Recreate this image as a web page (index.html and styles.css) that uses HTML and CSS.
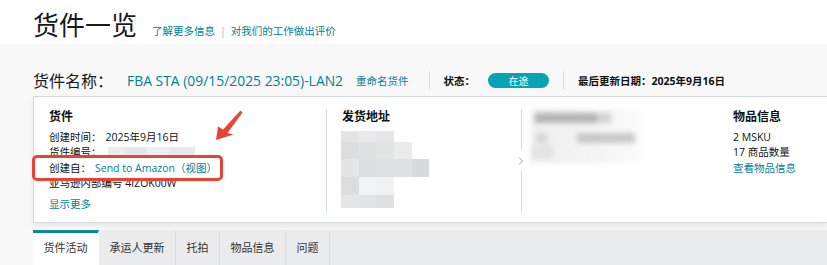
FILE: index.html
```html
<!DOCTYPE html>
<html lang="zh-CN">
<head>
<meta charset="utf-8">
<title>货件一览</title>
<link rel="stylesheet" href="styles.css">
</head>
<body>
<header class="top">
  <h1 class="title">货件一览</h1>
  <nav class="top-links">
    <a href="#">了解更多信息</a>
    <span class="sep">|</span>
    <a href="#">对我们的工作做出评价</a>
  </nav>
</header>
<main class="page">
  <div class="ship-head">
    <span class="ship-label">货件名称：</span>
    <a class="ship-name" href="#">FBA STA (09/15/2025 23:05)-LAN2</a>
    <a class="rename" href="#">重命名货件</a>
    <span class="vdiv"></span>
    <span class="status-label">状态：</span>
    <span class="pill">在途</span>
    <span class="vdiv vdiv-2"></span>
    <span class="updated">最后更新日期：2025年9月16日</span>
  </div>

  <section class="card">
    <div class="col col-ship">
      <h3 class="col-title">货件</h3>
      <div class="row"><span class="k">创建时间：</span>2025年9月16日</div>
      <div class="row"><span class="k">货件编号：</span><span class="redact"></span></div>
      <div class="row"><span class="k">创建自：</span><a href="#">Send to Amazon（视图）</a></div>
      <div class="row">亚马逊内部编号 4IZOK00W</div>
      <a class="more" href="#">显示更多</a>
    </div>

    <div class="col col-from">
      <h3 class="col-title">发货地址</h3>
      <div class="mosaic">
        <div class="m-row m-a"><i style="background:#e3e4e6"></i><i style="background:#e9eaeb"></i><i style="background:#e5e7ea"></i></div>
        <div class="m-row m-b"><i style="background:#dcdddf"></i><i style="background:#e0e1e3"></i><i style="background:#e3e5e4"></i><i style="background:#eaebec"></i></div>
        <div class="m-row m-c"><i style="background:#e4e5e7"></i><i style="background:#dcdde0"></i><i style="background:#e0e1e3"></i><i style="background:#dfe0e3"></i><i style="background:#d9dade"></i></div>
        <div class="m-row m-d"><i style="background:#dcdddf"></i><i style="background:#f3f4f5"></i><i style="background:#f1f2f4"></i></div>
        <div class="m-row m-e"><i style="background:#e5e6e8"></i><i style="background:#e3e4e6"></i><i style="background:#dfe0e2"></i></div>
      </div>
    </div>

    <div class="split">
      <span class="split-line"></span>
      <svg class="chev" width="6" height="8" viewBox="0 0 6 8"><path d="M1 0.8 L4.6 4 L1 7.2" fill="none" stroke="#c8c8c8" stroke-width="1.2"/></svg>
      <span class="split-line"></span>
    </div>

    <div class="col col-to">
      <div class="blur">
        <div class="b-line b-1"><span class="b-dark"></span><span class="b-mid"></span></div>
        <div class="b-line b-2"><span class="b-light"></span><span class="b-gap"></span><span class="b-mid2"></span></div>
        <div class="b-line b-3"><span class="b-light2"></span></div>
      </div>
    </div>

    <div class="col col-items">
      <h3 class="col-title">物品信息</h3>
      <div class="row">2 MSKU</div>
      <div class="row">17 商品数量</div>
      <div class="row"><a href="#">查看物品信息</a></div>
    </div>

    <span class="mark-box"></span>
    <svg class="mark-arrow" width="36" height="40" viewBox="0 0 36 40">
      <polygon points="5,34 7,20.5 12,23.5 29.5,4.5 31.5,6.5 16.5,27 22.5,28.5" fill="#ea4336"/>
    </svg>
  </section>

  <nav class="tabs">
    <span class="tab active">货件活动</span>
    <span class="tab">承运人更新</span>
    <span class="tab">托拍</span>
    <span class="tab">物品信息</span>
    <span class="tab">问题</span>
  </nav>
</main>
</body>
</html>
```

FILE: styles.css
```css
* { box-sizing: border-box; }
html, body { margin: 0; padding: 0; }
body {
  width: 827px;
  height: 265px;
  overflow: hidden;
  background: #f8f8f8;
  font-family: "Open Sans", "Noto Sans CJK SC", sans-serif;
  font-size: 10.5px;
  color: #0f1111;
}
a { color: #008296; text-decoration: none; }

.top {
  height: 44px;
  background: #fff;
  display: flex;
  align-items: baseline;
  padding: 10px 0 0 33px;
}
.title {
  margin: 0 15px 0 0;
  font-family: "Noto Sans CJK SC", sans-serif;
  font-size: 26px;
  font-weight: 400;
  line-height: 28px;
  color: #16191f;
}
.top-links {
  display: flex;
  align-items: baseline;
  gap: 5px;
  font-size: 10.5px;
}
.sep { color: #b0b4b8; }

.page { padding-left: 33px; }

.ship-head {
  height: 52px;
  padding-top: 20px;
  display: flex;
  align-items: center;
  white-space: nowrap;
}
.ship-label {
  font-family: "Noto Sans CJK SC", sans-serif;
  font-size: 16px;
  color: #16191f;
}
.ship-name { font-size: 13.9px; margin-left: 14px; }
.rename { font-size: 10.5px; margin-left: 13px; }
.vdiv {
  width: 1px;
  height: 18px;
  background: #d5d9d9;
  margin: 0 14px 0 20px;
}
.vdiv-2 { margin: 0 14px 0 14px; }
.status-label { font-weight: 700; }
.pill {
  width: 61px;
  height: 15px;
  margin-left: 13px;
  border-radius: 8px;
  background: #05a3b4;
  color: #fff;
  font-size: 10px;
  display: inline-flex;
  align-items: center;
  justify-content: center;
}
.updated { font-weight: 700; }

.card {
  position: relative;
  height: 127px;
  display: flex;
  background: #fff;
  border: 1px solid #d5d9d9;
  border-right: none;
  box-shadow: 0 3px 5px rgba(0, 0, 0, 0.07);
  padding: 12px 0 10px 0;
}
.col { height: 103px; }
.col-title {
  margin: 0 0 5px 0;
  font-size: 12px;
  font-weight: 700;
  line-height: 16px;
}
.row { line-height: 15.3px; white-space: nowrap; }
.k { margin-right: 4px; }
.redact {
  display: inline-block;
  width: 87px;
  height: 11px;
  vertical-align: -2px;
  margin-left: 2px;
  background: linear-gradient(90deg, #ececed 0 20%, #e6e7e9 20% 45%, #eeeff0 45% 70%, #e8e9ea 70%);
}
.more { display: inline-block; margin-top: 6px; line-height: 15px; }

.col-ship { width: 292px; padding-left: 15px; }
.col-from {
  width: 195px;
  padding-left: 15px;
  border-left: 1px solid #d5d9d9;
}
.mosaic { margin: 6px 0 0 -1px; }
.m-row { display: flex; }
.m-row i { display: block; width: 17.7px; }
.m-a { height: 11px; }
.m-b { height: 17px; }
.m-c { height: 18px; }
.m-d { height: 18px; }
.m-e { height: 13px; }

.split {
  width: 10px;
  margin-left: -5px;
  display: flex;
  flex-direction: column;
  align-items: center;
  height: 103px;
}
.split-line { width: 1px; background: #d5d9d9; }
.split-line:first-child { height: 41px; }
.split-line:last-child { flex: 1; }
.chev { margin: 7px 0 6px 0; }

.col-to { width: 207px; padding-left: 5px; }
.blur {
  width: 110px;
  height: 54px;
  filter: blur(2.5px);
  background: linear-gradient(90deg, #efefef 0, #f4f4f4 60%, #fbfbfb 100%);
  padding-top: 4px;
}
.b-line { display: flex; }
.b-1 { height: 10px; padding-left: 4px; }
.b-dark { width: 62px; background: #b4b4b4; }
.b-mid { width: 14px; background: #d2d2d2; }
.b-2 { height: 10px; margin-top: 10px; padding-left: 5px; }
.b-light { width: 11px; background: #d6d6d6; }
.b-gap { width: 30px; }
.b-mid2 { width: 58px; background: #c9c9c9; }
.b-3 { height: 14px; margin-top: 2px; }
.b-light2 { width: 22px; background: #e4e4e4; }

.col-items { padding-left: 0; }

.mark-box {
  position: absolute;
  left: -2px;
  top: 58px;
  width: 191px;
  height: 26px;
  border: 3px solid #ea4336;
  border-radius: 5px;
}
.mark-arrow {
  position: absolute;
  left: 177px;
  top: 9px;
}

.tabs {
  margin-top: 7px;
  height: 40px;
  display: flex;
  align-items: flex-start;
  background: #eaebed;
}
.tab {
  height: 40px;
  padding: 0 10.5px;
  border-top: 3px solid transparent;
  border-right: 1px solid #d8dadd;
  font-size: 11px;
  line-height: 30px;
  color: #333;
  white-space: nowrap;
}
.tab.active {
  background: #fff;
  border-top-color: #0c8a99;
  border-right-color: #fff;
}
```
